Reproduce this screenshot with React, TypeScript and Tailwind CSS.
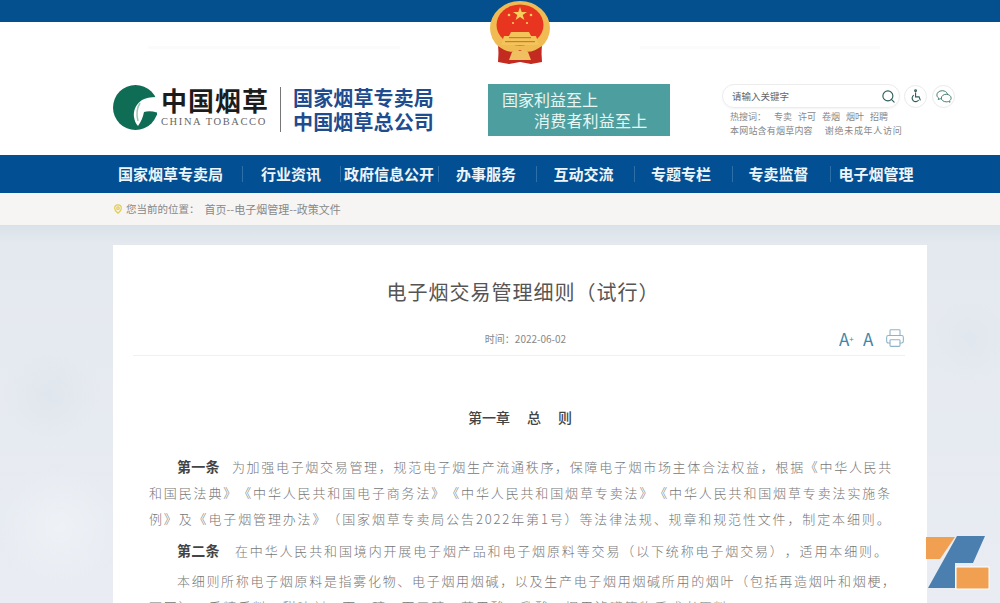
import React from "react";
import { Search, MapPin, Printer } from "lucide-react";

const NAV = [
  { label: "国家烟草专卖局", cls: "w-[130px] justify-start pl-[5px]" },
  { label: "行业资讯", cls: "w-[98px] justify-center pr-[1px]" },
  { label: "政府信息公开", cls: "w-[98px] justify-center pr-[1px]" },
  { label: "办事服务", cls: "w-[98px] justify-center pr-[3px]" },
  { label: "互动交流", cls: "w-[98px] justify-center pr-[4px]" },
  { label: "专题专栏", cls: "w-[98px] justify-center pr-[5px]" },
  { label: "专卖监督", cls: "w-[98px] justify-center pr-[6px]" },
  { label: "电子烟管理", cls: "w-[90px] justify-center" },
];

const Emblem = () => (
  <svg viewBox="0 0 62 66" className="w-[62px] h-[66px]">
    <path d="M10 44 L9 62 L20 64 L31 62 L42 64 L53 62 L52 44 Z" fill="#c32a20" />
    <ellipse cx="31" cy="28" rx="30" ry="27" fill="#efbb52" />
    <ellipse cx="31" cy="25" rx="23.500" ry="20.500" fill="#e8351f" />
    <path d="M31 7 l1.700 5 h5.300 l-4.300 3.100 1.700 5 -4.400-3.100 -4.400 3.100 1.700-5 -4.300-3.100 h5.300 Z" fill="#f6cf5c" />
    <circle cx="20" cy="15" r="1.300" fill="#f6cf5c" />
    <circle cx="42" cy="15" r="1.300" fill="#f6cf5c" />
    <circle cx="24" cy="23" r="1.100" fill="#f6cf5c" />
    <circle cx="38" cy="23" r="1.100" fill="#f6cf5c" />
    <path d="M22 32 h18 l2 4 h5 l3 9 H12 l3-9 h5 Z" fill="#f2c45a" />
    <rect x="20" y="37" width="22" height="1.200" fill="#d8742f" />
    <rect x="16" y="41" width="30" height="1.200" fill="#d8742f" />
    <path d="M9 46 C16 51 23 54 31 50 C39 54 46 51 53 46 L52 54 C44 59 37 56 31 55 C25 56 18 59 10 54 Z" fill="#c32a20" />
    <path d="M23 52 C26 50 29 50 31 51 C33 50 36 50 39 52 L42 60 H20 Z" fill="#f0c060" />
  </svg>
);

const TobaccoMark = () => (
  <svg viewBox="0 0 44 47" className="w-[44px] h-[47px] shrink-0">
    <circle cx="22.500" cy="23.500" r="22.500" fill="#0f6d55" />
    <path
      d="M46 13 C38 13 33 14 29 16 C23 20 20 27 21 33 C21.500 37 23 40 25 42 C28 38 30 33 31 28 C35 26.500 40 27 46 29 Z"
      fill="#fff"
    />
    <path d="M27 19 C24 24 23 30 25 37" fill="none" stroke="#9cc4b4" strokeWidth="1.500" />
  </svg>
);

const ZLogo = () => (
  <svg viewBox="0 0 66 56" className="w-[66px] h-[56px]">
    <path d="M1 2 H30 L15 24 H1 Z" fill="#f0a050" />
    <path d="M32 1 H60 L48 28 H30 V53 H3 Z" fill="#4a7fb0" />
    <rect x="31" y="32" width="33" height="22" fill="#f0a050" stroke="#fff" strokeWidth="1" />
  </svg>
);

const Wheelchair = () => (
  <svg viewBox="0 0 16 16" className="w-[14px] h-[14px] fill-none stroke-[#2f5d5a] stroke-[1.300]">
    <circle cx="7.500" cy="2" r="1" />
    <path d="M7.500 4 V9 H11.500 L13 13" />
    <path d="M5.500 7 A4 4 0 1 0 11 12.500" />
  </svg>
);

const WeChat = () => (
  <svg viewBox="0 0 18 16" className="w-[16px] h-[15px] fill-none stroke-[#3f7f6f] stroke-[1.100]">
    <path d="M7 1.500 C3.500 1.500 1 3.700 1 6.300 C1 7.800 1.800 9 3 9.800 L2.500 11.500 L4.700 10.500 C5.200 10.700 5.800 10.800 6.500 10.800" />
    <path d="M7 1.500 C10 1.500 12.300 3 12.900 5.300" />
    <path d="M11.500 5.500 C14.500 5.500 17 7.400 17 9.800 C17 11 16.300 12.100 15.300 12.800 L15.800 14.500 L13.800 13.600 C13.100 13.900 12.300 14 11.500 14 C8.500 14 6 12.100 6 9.800 C6 7.400 8.500 5.500 11.500 5.500 Z" />
  </svg>
);

export default function App() {
  return (
    <div className="relative w-[1000px] h-[603px] overflow-hidden bg-white [text-spacing-trim:space-all] font-['Noto_Sans_CJK_SC','Noto_Sans',sans-serif]">
      {/* top strip and emblem */}
      <div className="h-[22px] bg-[#04508f]" />
      <div className="absolute left-[489px] top-0">
        <Emblem />
      </div>
      {/* faint marks either side of the emblem */}
      <div className="absolute left-[148px] top-[46px] w-[252px] h-[3px] bg-[#fbfbfb]" />
      <div className="absolute left-[640px] top-[46px] w-[240px] h-[3px] bg-[#fbfbfb]" />

      {/* header */}
      <header className="h-[133px] px-[113px] flex items-start pt-[62px]">
        <TobaccoMark />
        <div className="ml-[4px] w-[119px] shrink-0">
          <div className="text-[26px] leading-[32px] font-bold text-[#1c1c1c] tracking-[1px] whitespace-nowrap">中国烟草</div>
          <div className="text-[10.500px] leading-[12px] text-[#666] tracking-[1.600px] whitespace-nowrap font-['Liberation_Serif',serif]">CHINA TOBACCO</div>
        </div>
        <div className="w-px h-[45px] mt-[3px] bg-[#777] shrink-0" />
        <div className="ml-[12px] w-[150px] mt-[2px] text-[20px] leading-[24px] font-bold tracking-[0.140px] text-[#1f4c8f] whitespace-nowrap shrink-0">
          <div>国家烟草专卖局</div>
          <div>中国烟草总公司</div>
        </div>
        <div className="ml-[45px] w-[182px] h-[52px] bg-[#4d9f9f] text-[#e8f6f4] text-[16px] leading-[21px] pt-[5px] pl-[14px] shrink-0">
          <div>国家利益至上</div>
          <div className="pl-[32px] tracking-[0.200px]">消费者利益至上</div>
        </div>
        <div className="ml-[52px] shrink-0">
          <div className="flex items-center">
            <div className="w-[178px] h-[24px] rounded-full border border-[#ececec] flex items-center justify-between pl-[9px] pr-[3px] shadow-[0_1px_2px_rgba(0,0,0,0.05)]">
              <span className="text-[9.500px] text-[#666]">请输入关键字</span>
              <Search size={15} className="text-[#2f5d5a]" strokeWidth={1.800} />
            </div>
            <div className="ml-[4px] w-[23px] h-[23px] rounded-full border border-[#eaeaea] flex items-center justify-center">
              <Wheelchair />
            </div>
            <div className="ml-[5px] w-[23px] h-[23px] rounded-full border border-[#eaeaea] flex items-center justify-center">
              <WeChat />
            </div>
          </div>
          <div className="mt-[2px] pl-[8px] text-[9px] leading-[14px] text-[#888] whitespace-nowrap">
            <div className="flex gap-[6px]">
              <span className="mr-[2px]">热搜词：</span>
              <span>专卖</span>
              <span>许可</span>
              <span>卷烟</span>
              <span>烟叶</span>
              <span>招聘</span>
            </div>
            <div className="flex gap-[12px]">
              <span className="tracking-[0.200px]">本网站含有烟草内容</span>
              <span className="tracking-[0.700px]">谢绝未成年人访问</span>
            </div>
          </div>
        </div>
      </header>

      {/* main nav */}
      <nav className="h-[38px] bg-[#034f93] px-[113px] flex items-center">
        {NAV.map((item, i) => (
          <div
            key={item.label}
            className={`${item.cls} shrink-0 h-[16px] flex items-center text-[15px] font-bold text-[#eef5f8] whitespace-nowrap ${
              i < NAV.length - 1 ? "border-r border-[#2f6fa8]" : ""
            }`}
          >
            {item.label}
          </div>
        ))}
      </nav>

      {/* breadcrumb */}
      <div className="h-[32px] bg-[#f6f5f4] pl-[113px] flex items-center text-[10.500px] text-[#888] whitespace-nowrap">
        <MapPin size={10} className="text-[#e3cc52] mr-[3px]" strokeWidth={3} />
        <span className="mr-[5px]">您当前的位置：</span>
        <span className="text-[11px]">首页--电子烟管理--政策文件</span>
      </div>

      {/* marble background + article card */}
      <main className="h-[378px] px-[113px] pt-[20px] bg-[#e7ecf2] bg-[radial-gradient(circle_at_5%_45%,#e0e6ed_0%,transparent_5%),radial-gradient(circle_at_97%_30%,#e1e7ee_0%,transparent_4%),radial-gradient(circle_at_6%_80%,#eef1f6_0%,transparent_6%),linear-gradient(180deg,#d9e2e9_0%,#e4e9ef_5%,#e9edf3_100%)]">
        <article className="w-[814px] h-full bg-white pt-[33px]">
          <h1 className="text-center text-[20px] leading-[28px] text-[#555] tracking-[1px] pl-[6px]">电子烟交易管理细则（试行）</h1>
          <div className="relative mt-[20px] mx-[20px] w-[772px] h-[30px] border-b border-[#f0f0f0] text-center pt-[5px] pl-[13px] text-[10px] text-[#888]">
            时间：2022-06-02
            {/* font size + print tools */}
            <div className="absolute right-0 top-0 flex items-center text-[#3f86a8]">
              <span className="w-[24px] text-left text-[17px] leading-[20px] mt-[3px]">A<sup className="text-[8px]">+</sup></span>
              <span className="w-[22px] text-left text-[17px] leading-[20px] mt-[3px]">A</span>
              <Printer size={20} className="text-[#8fb3c8]" strokeWidth={1.300} />
            </div>
          </div>
          <h2 className="mt-[51px] flex justify-center gap-[17px] text-[14px] leading-[20px] font-medium text-[#444] whitespace-nowrap">
            <span>第一章</span>
            <span>总</span>
            <span>则</span>
          </h2>
          <div className="mt-[26px] pl-[36px] text-[13px] leading-[26px] tracking-[1.860px] text-[#777] whitespace-nowrap font-light">
            <p className="pl-[28px] tracking-[1.690px]"><b className="font-bold text-[14px] text-[#444] tracking-[0.300px] mr-[12px]">第一条</b>为加强电子烟交易管理，规范电子烟生产流通秩序，保障电子烟市场主体合法权益，根据《中华人民共</p>
            <p>和国民法典》《中华人民共和国电子商务法》《中华人民共和国烟草专卖法》《中华人民共和国烟草专卖法实施条</p>
            <p>例》及《电子烟管理办法》（国家烟草专卖局公告2022年第1号）等法律法规、规章和规范性文件，制定本细则。</p>
            <p className="pl-[28px] mt-[5px]"><b className="font-bold text-[14px] text-[#444] tracking-[0.300px] mr-[15px]">第二条</b>在中华人民共和国境内开展电子烟产品和电子烟原料等交易（以下统称电子烟交易），适用本细则。</p>
            <p className="pl-[28px] mt-[4px] tracking-[1.690px]">本细则所称电子烟原料是指雾化物、电子烟用烟碱，以及生产电子烟用烟碱所用的烟叶（包括再造烟叶和烟梗，</p>
            <p>下同）、香精香料、甜味剂、丙二醇、丙三醇、苯甲酸、乳酸、烟用滤嘴等物质或者原料。</p>
          </div>
        </article>
      </main>

      {/* watermark */}
      <div className="absolute left-[925px] top-[535px]">
        <ZLogo />
      </div>
    </div>
  );
}
